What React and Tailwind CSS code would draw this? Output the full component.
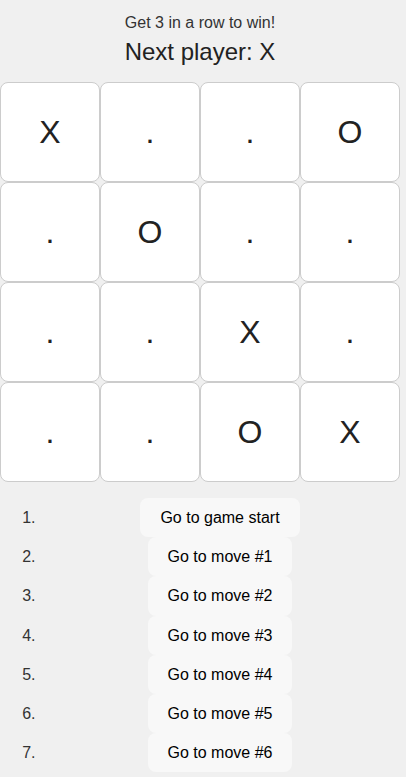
import React from "react";

const board = ["X", ".", ".", "O", ".", "O", ".", ".", ".", ".", "X", ".", ".", ".", "O", "X"];
const moves = [
  "Go to game start",
  "Go to move #1",
  "Go to move #2",
  "Go to move #3",
  "Go to move #4",
  "Go to move #5",
  "Go to move #6",
];

export default function App() {
  return (
    <div className="min-h-screen bg-[#f0f0f0] font-['Liberation_Sans',Arial,sans-serif]">
      <div className="w-[400px]">
        <div className="pt-[11px] text-center text-[16px] leading-[24px] text-[#333]">
          Get 3 in a row to win!
        </div>
        <div className="-mt-px text-center text-[24px] leading-[36px] text-[#222]">
          Next player: X
        </div>
        <div className="mt-[12px] grid grid-cols-[repeat(4,100px)]">
          {board.map((v, i) => (
            <div
              key={i}
              className="flex h-[100px] items-center justify-center rounded-lg border border-[#ccc] bg-white text-[32px] text-[#222]"
            >
              {v}
            </div>
          ))}
        </div>
        <ol className="mt-[16px] list-decimal pl-10 text-[16px] leading-[24px] text-[#333]">
          {moves.map((m) => (
            <li key={m} className="text-center">
              <button className="inline-block rounded-lg bg-[#f8f8f8] px-5 py-[10px] text-[16px] leading-[19.2px] text-black">
                {m}
              </button>
            </li>
          ))}
        </ol>
      </div>
    </div>
  );
}
